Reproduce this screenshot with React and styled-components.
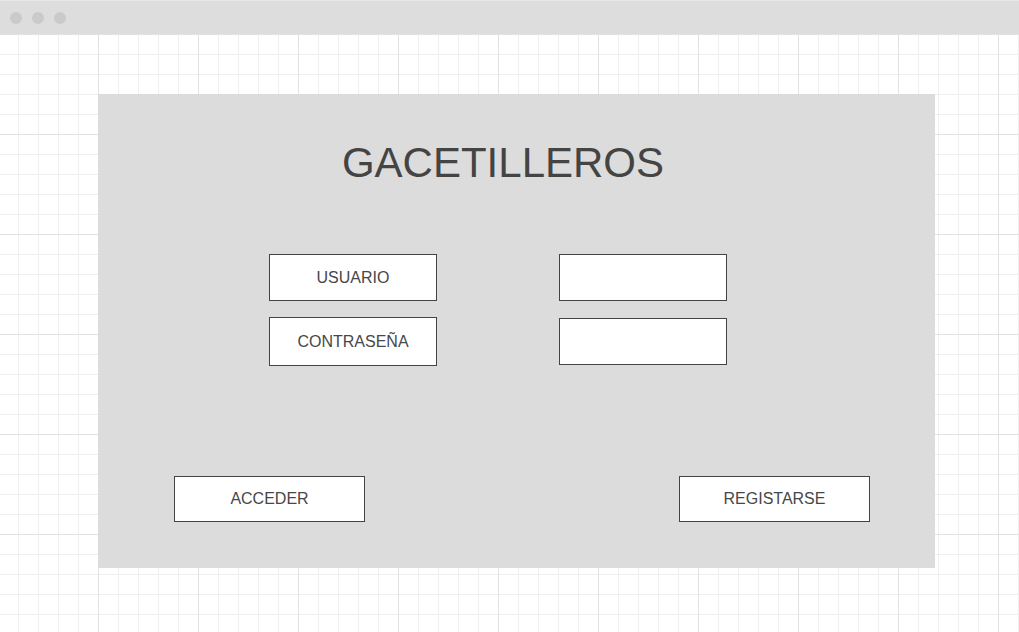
import React from 'react';
import styled, { createGlobalStyle } from 'styled-components';

const GlobalStyle = createGlobalStyle`
html, body {
  margin: 0;
  padding: 0;
}
body {
  font-family: "Liberation Sans", Arial, sans-serif;
  background: #fff;
}
`;

const Window = styled.div`
width: 1019px;
height: 632px;
display: flex;
flex-direction: column;
overflow: hidden;
`;

const TitleBar = styled.div`
height: 34px;
flex: none;
background: #dddddd;
border-top: 1px solid #e8e8e8;
box-sizing: border-box;
display: flex;
align-items: center;
gap: 10px;
padding-left: 10px;
`;

const Dot = styled.span`
width: 12px;
height: 12px;
border-radius: 50%;
background: #cacaca;
`;

const Canvas = styled.div`
flex: 1;
background-color: #fff;
background-image:
  linear-gradient(to right, #e2e2e2 1px, transparent 1px),
  linear-gradient(to bottom, #e2e2e2 1px, transparent 1px),
  linear-gradient(to right, #efefef 1px, transparent 1px),
  linear-gradient(to bottom, #efefef 1px, transparent 1px);
background-size: 100px 100px, 100px 100px, 20px 20px, 20px 20px;
background-position: -2px 0, 0 0, -2px 0, 0 0;
padding: 60px 0 0 98px;
`;

const Panel = styled.div`
width: 837px;
height: 474px;
box-sizing: border-box;
background: #dcdcdc;
padding-top: 48px;
display: flex;
flex-direction: column;
`;

const Title = styled.h1`
margin: 0 0 0 -27px;
font-weight: normal;
font-size: 42px;
line-height: 42px;
color: #444;
text-align: center;
`;

const Form = styled.div`
margin: 70px 0 0 171px;
display: grid;
grid-template-columns: 168px 168px;
grid-template-rows: 47px 49px;
column-gap: 122px;
row-gap: 16px;
align-items: center;
`;

const Box = styled.div`
box-sizing: border-box;
height: ${p => p.h || 47}px;
background: #fff;
border: 1px solid #444;
display: flex;
align-items: center;
justify-content: center;
font-size: 16px;
color: #474747;
`;

const Actions = styled.div`
margin-top: 110px;
padding: 0 65px 0 76px;
display: flex;
justify-content: space-between;
`;

const Button = styled.div`
box-sizing: border-box;
width: 191px;
height: 46px;
background: #fff;
border: 1px solid #444;
display: flex;
align-items: center;
justify-content: center;
font-size: 16px;
color: #474747;
`;

export default function App() {
  return (
    <Window>
      <GlobalStyle />
      <TitleBar>
        <Dot />
        <Dot />
        <Dot />
      </TitleBar>
      <Canvas>
        <Panel>
          <Title>GACETILLEROS</Title>
          <Form>
            <Box>USUARIO</Box>
            <Box />
            <Box h={49}>CONTRASEÑA</Box>
            <Box />
          </Form>
          <Actions>
            <Button>ACCEDER</Button>
            <Button>REGISTARSE</Button>
          </Actions>
        </Panel>
      </Canvas>
    </Window>
  );
}
